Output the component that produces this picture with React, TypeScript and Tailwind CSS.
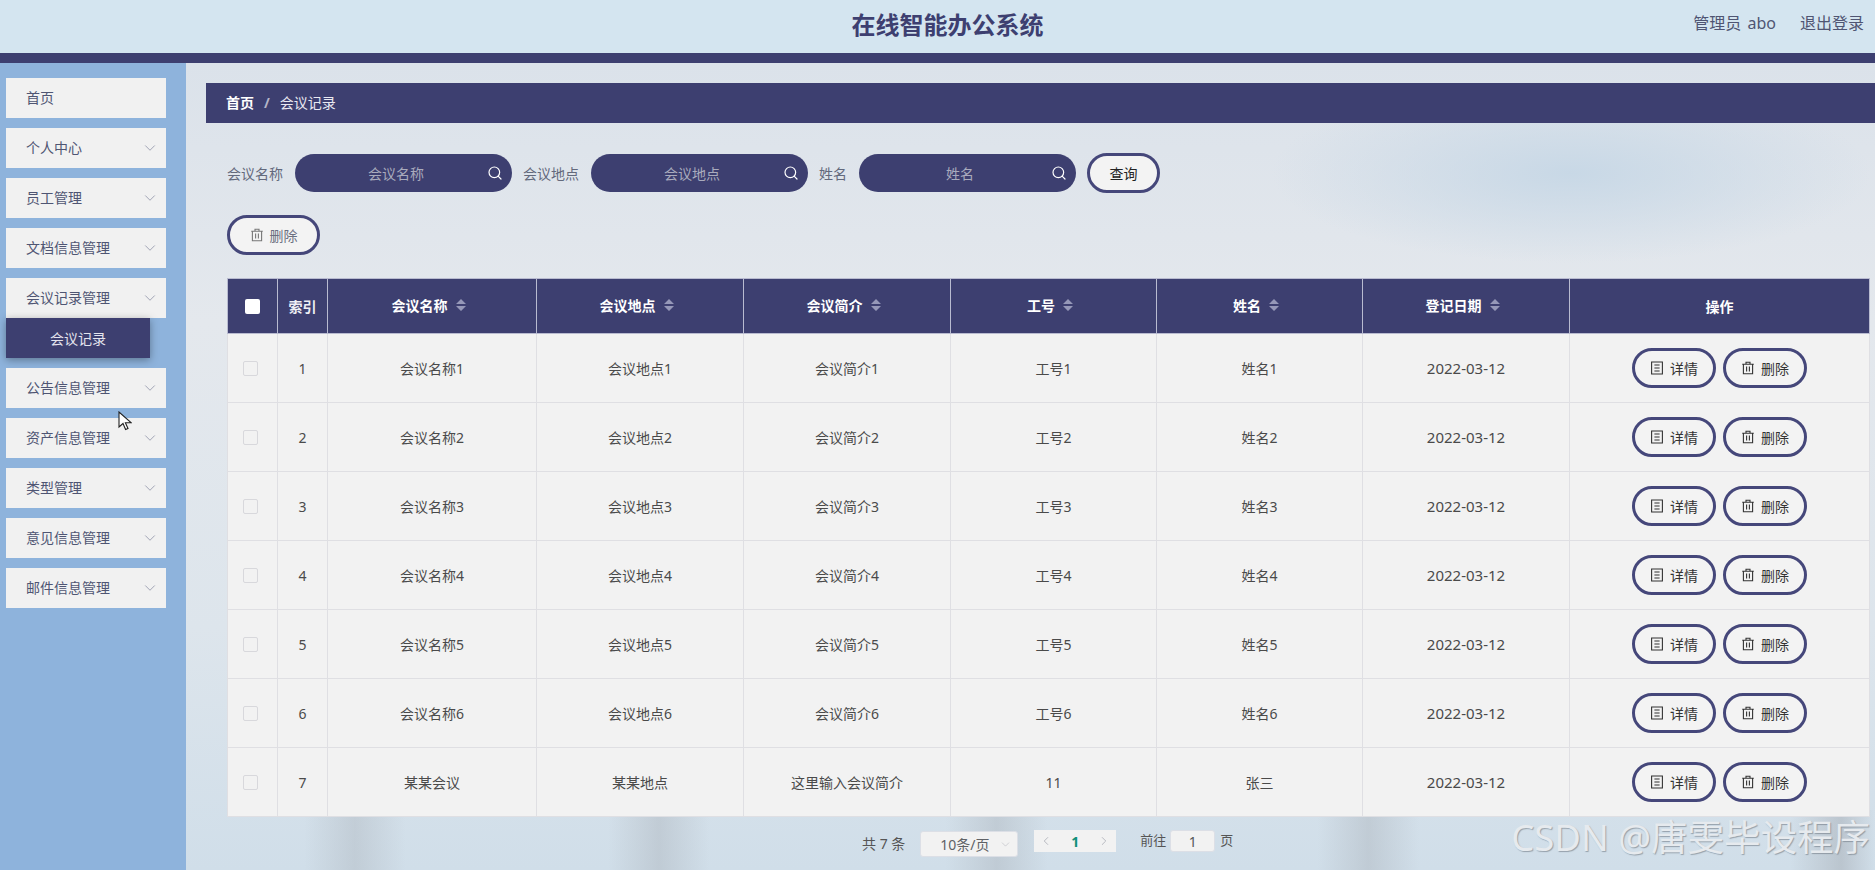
import { ChevronDown, ChevronLeft, ChevronRight, Search } from "lucide-react"

const font = "font-['Noto_Sans','Noto_Sans_CJK_SC',sans-serif]"

const menus = [
  { name: "首页", arrow: false },
  { name: "个人中心", arrow: true },
  { name: "员工管理", arrow: true },
  { name: "文档信息管理", arrow: true },
  { name: "会议记录管理", arrow: true, sub: "会议记录" },
  { name: "公告信息管理", arrow: true },
  { name: "资产信息管理", arrow: true },
  { name: "类型管理", arrow: true },
  { name: "意见信息管理", arrow: true },
  { name: "邮件信息管理", arrow: true },
]

const rows = [
  ["1", "会议名称1", "会议地点1", "会议简介1", "工号1", "姓名1"],
  ["2", "会议名称2", "会议地点2", "会议简介2", "工号2", "姓名2"],
  ["3", "会议名称3", "会议地点3", "会议简介3", "工号3", "姓名3"],
  ["4", "会议名称4", "会议地点4", "会议简介4", "工号4", "姓名4"],
  ["5", "会议名称5", "会议地点5", "会议简介5", "工号5", "姓名5"],
  ["6", "会议名称6", "会议地点6", "会议简介6", "工号6", "姓名6"],
  ["7", "某某会议", "某某地点", "这里输入会议简介", "11", "张三"],
]

const TrashIcon = () => (
  <svg width="14" height="14" viewBox="0 0 14 14" fill="none" stroke="currentColor" strokeWidth="1.1">
    <path d="M1.2 3.2h11.6M5 3V1.2h4V3M2.4 3.2v9.6h9.2V3.2M5.6 5.5v5M8.4 5.5v5" />
  </svg>
)

const DocIcon = () => (
  <svg width="14" height="14" viewBox="0 0 14 14" fill="none" stroke="currentColor" strokeWidth="1.1">
    <path d="M1.6 1h10.8v12H1.6zM4.4 4h5.2M4.4 7h5.2M4.4 10h5.2" />
  </svg>
)

const Sort = () => (
  <svg width="10" height="14" viewBox="0 0 10 14" className="ml-[8px] mr-[7px] text-[#9698b8]" fill="currentColor">
    <path d="M5 1l5 5H0zM5 13L0 8h10z" />
  </svg>
)

const SearchBox = ({ label }: { label: string }) => (
  <>
    <span className="text-[14px] text-[#63697c] mr-[12px]">{label}</span>
    <div className="relative w-[217px] h-[38px] rounded-full bg-[#3d3f70] flex items-center justify-center pr-[15px] mr-[11px] text-[14px] text-[#a9abbd]">
      {label}
      <Search className="absolute right-[9px] top-[11px] text-white" size={16} strokeWidth={1.8} />
    </div>
  </>
)

const OutlineBtn = ({ children, w }: { children: React.ReactNode; w: string }) => (
  <button className={`${w} h-[40px] rounded-full border-[3px] border-[#45477a] bg-[#f3f3f3] flex items-center justify-center gap-[6px] text-[14px] text-[#333]`}>
    {children}
  </button>
)

const heads = ["会议名称", "会议地点", "会议简介", "工号", "姓名", "登记日期"]

export default function App() {
  return (
    <div className={`${font} relative w-[1875px] h-[870px] overflow-hidden flex flex-col`}>
      <header className="h-[53px] shrink-0 bg-[#d4e5f0] flex items-center relative justify-center">
        <h1 className="text-[24px] font-bold text-[#3d3f70] -mt-[3px] ml-[20px]">在线智能办公系统</h1>
        <div className="absolute right-[11px] top-[11px] flex gap-[24px] text-[16px] text-[#4f5573]">
          <span className="[word-spacing:2px]">管理员 abo</span>
          <span>退出登录</span>
        </div>
      </header>
      <div className="h-[10px] shrink-0 bg-[#3d3f70]" />
      <div className="flex flex-1 min-h-0">
        <aside className="w-[186px] shrink-0 bg-[#8eb3dc] pt-[15px] pl-[6px]">
          <div className="flex flex-col gap-[10px]">
            {menus.map((m) => (
              <div key={m.name}>
                <div className="w-[160px] h-[40px] bg-[#f1f1f1] flex items-center justify-between pl-[20px] pr-[7px] pb-[1px] text-[14px] text-[#4f5573]">
                  <span>{m.name}</span>
                  {m.arrow && <ChevronDown size={18} strokeWidth={1.1} className="text-[#8f93a8]" />}
                </div>
                {m.sub && (
                  <div className="w-[144px] h-[40px] bg-[#3d3f70] shadow-[0_2px_8px_rgba(0,0,0,0.35)] flex items-center justify-center text-[14px] text-[#e4e4ee]">
                    {m.sub}
                  </div>
                )}
              </div>
            ))}
          </div>
        </aside>
        <main className="flex-1 min-w-0 pt-[20px] bg-no-repeat bg-[linear-gradient(90deg,transparent_7%,rgba(165,172,180,0.35)_10%,transparent_13%,transparent_25%,rgba(165,172,180,0.38)_28%,transparent_31%,transparent_45%,rgba(165,172,180,0.38)_48%,transparent_51%,transparent_67%,rgba(165,172,180,0.38)_70%,transparent_73%,transparent_95%,rgba(165,172,180,0.5)_98%,transparent_100%),radial-gradient(ellipse_300px_90px_at_82%_110px,#c8d8e6,transparent),linear-gradient(180deg,#dbe2ea_0%,#e4e8ed_32%,#dde5ec_70%,#d0dee9_100%)] bg-[length:100%_60px,100%_100%,100%_100%] bg-[position:0_100%,0_0,0_0]">
          <div className="ml-[20px] h-[40px] bg-[#3d3f70] flex items-center pl-[20px] pb-[1px] text-[14px] text-white">
            <span className="font-bold">首页</span>
            <span className="mx-[10px] font-bold text-[#b4b5c8]">/</span>
            <span className="text-[#e9e9f2]">会议记录</span>
          </div>
          <div className="pl-[41px] pr-[6px]">
            <div className="flex items-center mt-[30px]">
              <SearchBox label="会议名称" />
              <SearchBox label="会议地点" />
              <SearchBox label="姓名" />
              <OutlineBtn w="w-[73px]">
                <span className="text-[#222]">查询</span>
              </OutlineBtn>
            </div>
            <div className="mt-[22px]">
              <OutlineBtn w="w-[93px]">
                <span className="text-[#777]"><TrashIcon /></span>
                <span className="text-[#6b6f80]">删除</span>
              </OutlineBtn>
            </div>
            <table className="mt-[23px] w-[1642px] table-fixed border-collapse text-[14px] text-center">
              <colgroup>
                <col className="w-[50px]" />
                <col className="w-[50px]" />
                <col className="w-[209px]" />
                <col className="w-[207px]" />
                <col className="w-[207px]" />
                <col className="w-[206px]" />
                <col className="w-[206px]" />
                <col className="w-[207px]" />
                <col className="w-[300px]" />
              </colgroup>
              <thead>
                <tr className="h-[55px] bg-[#3d3f70] text-white font-bold">
                  <th className="border border-[#b9bbd0]">
                    <span className="block w-[15px] h-[15px] mx-auto bg-white rounded-[2px]" />
                  </th>
                  <th className="border border-[#b9bbd0] text-[#eeeef4]">索引</th>
                  {heads.map((h) => (
                    <th key={h} className="border border-[#b9bbd0] pb-[2px]">
                      <span className="inline-flex items-center">
                        {h}
                        <Sort />
                      </span>
                    </th>
                  ))}
                  <th className="border border-[#b9bbd0]">操作</th>
                </tr>
              </thead>
              <tbody className="text-[#4a4a4a]">
                {rows.map((r) => (
                  <tr key={r[0]} className="h-[69px] bg-[#f2f2f2]">
                    <td className="border border-[#dfdfe3]">
                      <span className="block w-[15px] h-[15px] -translate-x-[2px] mx-auto bg-[#f2f2f2] border border-[#d8d8dc] rounded-[2px]" />
                    </td>
                    {r.map((c, i) => (
                      <td key={i} className="border border-[#dfdfe3]">{c}</td>
                    ))}
                    <td className="border border-[#dfdfe3] text-[15px]">2022-03-12</td>
                    <td className="border border-[#dfdfe3]">
                      <div className="flex justify-center gap-[7px]">
                        <OutlineBtn w="w-[84px]">
                          <DocIcon />
                          详情
                        </OutlineBtn>
                        <OutlineBtn w="w-[84px]">
                          <TrashIcon />
                          删除
                        </OutlineBtn>
                      </div>
                    </td>
                  </tr>
                ))}
              </tbody>
            </table>
            <div className="flex items-start mt-[13px] ml-[635px] text-[14px] text-[#555]">
              <span className="mt-[3px] mr-[15px]">共 7 条</span>
              <div className="w-[98px] h-[26px] mt-[1px] bg-[#f2f2f2] border border-[#dcdfe6] rounded-[3px] flex items-center justify-between pl-[19px] pr-[5px] text-[14px] text-[#606266]">
                10条/页
                <ChevronDown size={13} strokeWidth={1} className="text-[#b0b3bb]" />
              </div>
              <div className="w-[82px] h-[22px] ml-[16px] bg-[#f2f2f2] flex items-center justify-between px-[5px]">
                <ChevronLeft size={14} strokeWidth={1.4} className="text-[#aaadb5]" />
                <span className="text-[14px] font-bold text-[#0f8f78]">1</span>
                <ChevronRight size={14} strokeWidth={1.4} className="text-[#aaadb5]" />
              </div>
              <span className="ml-[24px] mt-[1px] text-[13px]">前往</span>
              <div className="w-[45px] h-[22px] ml-[4px] bg-[#f2f2f2] border border-[#dcdfe6] rounded-[3px] flex items-center justify-center text-[14px]">1</div>
              <span className="ml-[5px] mt-[1px] text-[13px]">页</span>
            </div>
          </div>
        </main>
      </div>
      {/* mouse pointer and csdn watermark sit on top of the page */}
      <svg className="absolute left-[118px] top-[411px]" width="14" height="20" viewBox="0 0 14 20">
        <path d="M1 1v15l4-3.5 2.6 6 2.4-1-2.6-5.8H13z" fill="#fff" stroke="#222" strokeWidth="1.1" />
      </svg>
      <div className="absolute right-[5px] top-[817px] text-[36.5px] leading-[40px] text-[#e6eaee] [text-shadow:1px_1px_1px_rgba(110,120,130,0.6)] whitespace-nowrap">
        CSDN @唐雯毕设程序
      </div>
    </div>
  )
}
